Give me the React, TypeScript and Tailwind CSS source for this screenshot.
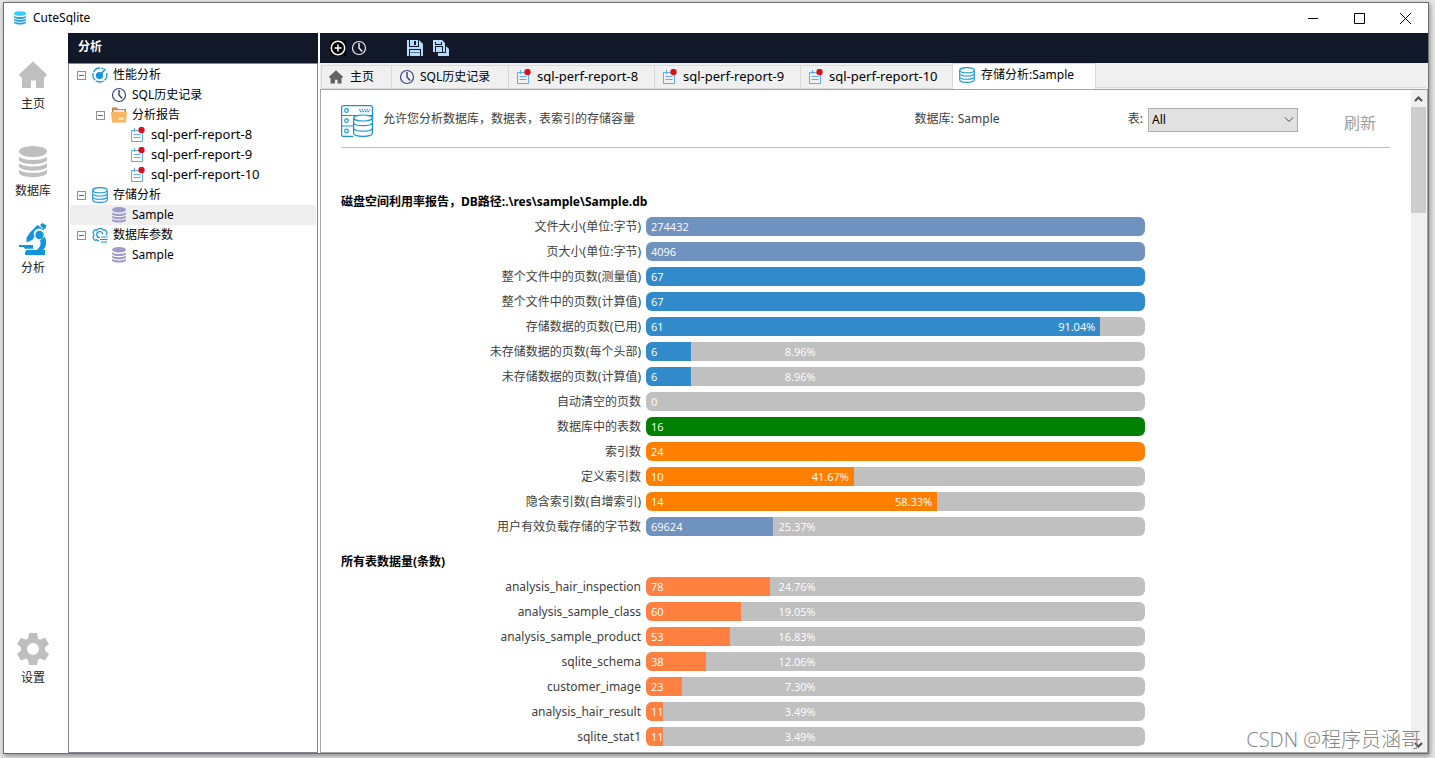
import React from 'react';

const FONT = "font-['Noto_Sans','Noto_Sans_CJK_SC',sans-serif]";

function ClockIcon({ className }: { className: string }) {
  return (
    <svg viewBox="0 0 16 16" className={className} fill="none" stroke="currentColor">
      <circle cx="8" cy="8" r="6.5" strokeWidth="1.2" />
      <path d="M8 3v5l3.2 3.6" strokeWidth="1.5" />
    </svg>
  );
}

function HomeIcon({ className }: { className: string }) {
  return (
    <svg viewBox="0 0 28 28" className={className} fill="currentColor">
      <path d="M14 .5 28 13.5 26.5 16H25v11h-8v-7.5h-5V27H3V16H1.5L0 13.5Z" />
    </svg>
  );
}

function StackIcon({ className, top = 'currentColor' }: { className: string; top?: string }) {
  return (
    <svg viewBox="0 0 28 32" className={className} fill="currentColor">
      <ellipse cx="14" cy="5.5" rx="14" ry="5.5" fill={top} />
      <path d="M0 10.5c3 4.500 25 4.500 28 0v3.500c-2 5.500-26 5.500-28 0Z" />
      <path d="M0 17c3 4.500 25 4.500 28 0v3.500c-2 5.500-26 5.500-28 0Z" />
      <path d="M0 23.500c3 4.500 25 4.500 28 0V27c-2 5.500-26 5.500-28 0Z" />
    </svg>
  );
}

function MicroscopeIcon({ className }: { className: string }) {
  return (
    <svg viewBox="0 0 28 32" className={className} fill="currentColor">
      <path d="M21 2 23.500 0l4 2.500-1 3-2 .5Z" />
      <path d="M18.500 2 25 6.500 24.500 7.500a5.500 5.500 0 0 0-9 6.200l-2 3L11 18l-3.500 1.500V15l3-5Z" />
      <circle cx="20.500" cy="12" r="4.200" />
      <path d="M25.500 13.500c3 5.500 1.500 10.500-1.500 13.500h2v5H6v-2.500L7.500 27h10c3.500-2 5-6 3.500-9.500Z" />
      <path d="M0 22h14v3.800H6L4.500 24H0Z" />
    </svg>
  );
}

function GearIcon({ className }: { className: string }) {
  return (
    <svg viewBox="0 0 32 32" className={className}>
      <path
        fill="currentColor"
        fillRule="evenodd"
        d="M12 0h8l1 5.500 2 1.200 5-2L32 11l-4 3.500v3L32 21l-4 6.500-5-2-2 1.200L20 32h-8l-1-5.300-2-1.200-5 2L0 21l4-3.500v-3L0 11l4-6.300 5 2 2-1.200ZM16 10a6 6 0 1 0 0 12 6 6 0 0 0 0-12Z"
      />
    </svg>
  );
}

function CylinderIcon({ className }: { className: string }) {
  return (
    <svg viewBox="0 0 16 16" className={className} fill="none" stroke="currentColor" strokeWidth="1.1">
      <ellipse cx="8" cy="3.2" rx="7.3" ry="2.6" />
      <path d="M.7 3.2v9.5c0 3.600 14.600 3.600 14.600 0V3.200M.7 6.500c0 3.400 14.600 3.400 14.600 0M.7 9.700c0 3.400 14.600 3.400 14.600 0" />
    </svg>
  );
}

function ReportIcon({ className }: { className: string }) {
  return (
    <svg viewBox="0 0 16 16" className={className} fill="none">
      <path d="M1.500 3.500h11v11h-11ZM3.500 7.500h7M3.500 10.500h7M4.500 1v4" stroke="#5badf5" />
      <circle cx="11.500" cy="3" r="3.200" fill="#dc1219" />
    </svg>
  );
}

function GaugeIcon({ className }: { className: string }) {
  return (
    <svg viewBox="0 0 16 16" className={className} fill="none" stroke="#1296db">
      <path d="M14.600 6A7 7 0 0 1 8 15 7 7 0 1 1 11.500 2" strokeWidth="1.300" strokeDasharray="8 1" />
      <circle cx="7.500" cy="8.500" r="3.600" fill="#1296db" stroke="none" />
      <path d="m7.500 8.500 6-6.500" strokeWidth="1.500" />
    </svg>
  );
}

function FolderIcon({ className }: { className: string }) {
  return (
    <svg viewBox="0 0 16 16" className={className}>
      <path d="M1 .5h5l1 1.500h8v4H1Z" fill="#c08a56" />
      <path d="M2.500 3h11v3h-11Z" fill="#eee6da" />
      <path d="M0 5h16l-1 10.500H1Z" fill="#f9b562" />
      <path d="M7.500 10h5v3h-5Z" fill="#fde0b2" />
    </svg>
  );
}

function ParamsIcon({ className }: { className: string }) {
  return (
    <svg viewBox="0 0 16 16" className={className} fill="none" stroke="#1296db" strokeWidth="1.200">
      <path d="M7 14.200 5 12.800l-2.500.2-1.500-2.500L2 8 1 5.500 2.500 3 5 3.200 7 1.500h2.500l2 1.700 2-.2L15 5.500 14 8" />
      <path d="M8 10.500A3 3 0 1 1 10.700 7M9 10h6.500M8 12.500h7.500M9 15h6" />
    </svg>
  );
}

function Sidebar() {
  return (
    <nav className="flex w-16 shrink-0 flex-col text-xs leading-4 text-[#222]">
      <a href="#home" className="mt-7 flex flex-col items-center gap-[7px] pr-1.5">
        <HomeIcon className="h-7 w-7 text-[#bfbfbf]" />主页
      </a>
      <a href="#database" className="mt-[34px] flex flex-col items-center gap-[5px] pr-1.5">
        <StackIcon className="h-8 w-7 text-[#bfbfbf]" />数据库
      </a>
      <a href="#analysis" className="mt-6 flex flex-col items-center gap-[5px] pr-1.5">
        <MicroscopeIcon className="h-8 w-7 text-[#1296db]" />分析
      </a>
      <a href="#settings" className="mt-auto mb-[67px] flex flex-col items-center gap-[5px] pr-1.5">
        <GearIcon className="h-8 w-8 text-[#bfbfbf]" />设置
      </a>
    </nav>
  );
}

type Node = { label: string; icon: React.ReactNode; pad: string; branch?: boolean; active?: boolean };

const report = <ReportIcon className="h-4 w-4" />;
const sample = (
  <span className="flex w-4 justify-center text-[#9f9bc9]">
    <StackIcon className="h-4 w-3.5" />
  </span>
);

const tree: Node[] = [
  { label: '性能分析', pad: 'pl-[7px] text-xs', branch: true, icon: <GaugeIcon className="h-4 w-4" /> },
  { label: 'SQL历史记录', pad: 'pl-[41px] text-xs', icon: <ClockIcon className="h-4 w-4 text-[#3d4380]" /> },
  { label: '分析报告', pad: 'pl-[26px] text-xs', branch: true, icon: <FolderIcon className="h-4 w-4" /> },
  { label: 'sql-perf-report-8', pad: 'pl-[60px] text-[13px]', icon: report },
  { label: 'sql-perf-report-9', pad: 'pl-[60px] text-[13px]', icon: report },
  { label: 'sql-perf-report-10', pad: 'pl-[60px] text-[13px]', icon: report },
  { label: '存储分析', pad: 'pl-[7px] text-xs', branch: true, icon: <CylinderIcon className="h-4 w-4 text-[#1296db]" /> },
  { label: 'Sample', pad: 'pl-[41px] text-xs', icon: sample, active: true },
  { label: '数据库参数', pad: 'pl-[7px] text-xs', branch: true, icon: <ParamsIcon className="h-4 w-4" /> },
  { label: 'Sample', pad: 'pl-[41px] text-xs', icon: sample },
];

function TreePanel() {
  return (
    <aside className="flex w-[250px] shrink-0 flex-col">
      <h2 className="h-[30px] bg-[#111827] px-2.5 text-xs leading-7 font-bold text-white">分析</h2>
      <ul className="flex-1 border border-[#828790] px-px py-px text-black">
        {tree.map((n, i) => (
          <li key={i} className={`flex h-5 items-center ${n.pad} ${n.active ? 'bg-[#efefef]' : ''}`}>
            {n.branch && (
              <button aria-label={`折叠 ${n.label}`} className="mr-1.5 flex h-[9px] w-[9px] items-center justify-center border border-[#919191] bg-white">
                <span className="h-px w-[5px] bg-[#4b63a7]" />
              </button>
            )}
            {n.icon}
            <span className="ml-[5px] whitespace-nowrap">{n.label}</span>
          </li>
        ))}
      </ul>
    </aside>
  );
}

function Toolbar() {
  return (
    <div className="flex h-[30px] shrink-0 items-center bg-[#111827] pl-2.5">
      <button aria-label="新建">
        <svg viewBox="0 0 16 16" className="h-4 w-4" fill="none" stroke="#fff" strokeWidth="1.500">
          <rect width="16" height="16" fill="#000" stroke="none" />
          <circle cx="8" cy="8" r="6.700" />
          <path d="M8 4.500v7M4.500 8h7" />
        </svg>
      </button>
      <button aria-label="历史" className="ml-[5px]"><ClockIcon className="h-4 w-4 text-[#f0eaf6]" /></button>
      <button aria-label="保存" className="ml-10">
        <svg viewBox="0 0 16 16" className="h-4 w-4">
          <path d="M0 0h12l4 4v12H0Z" fill="#b5dcfb" />
          <path d="M2 0h1v6h8V0h1v7H2ZM7 1h2v4H7ZM2 9h12v7h-1v-6H3v6H2Z" fill="#111827" />
          <path d="M3 12h10v1H3Z" fill="#5f7c94" />
        </svg>
      </button>
      <button aria-label="全部保存" className="ml-2.5">
        <svg viewBox="0 0 16 16" className="h-4 w-4">
          <path d="M0 0h9l3 3v9H0ZM13 6l3 3v7H5v-3h8Z" fill="#b5dcfb" />
          <path d="M2 2h1v2h5V2h1v3H2ZM2 6h8v6H9V7H3v5H2Z" fill="#111827" />
        </svg>
      </button>
    </div>
  );
}

const tabs = [
  { label: '主页', style: 'w-[70px] gap-[7px] text-xs', icon: <HomeIcon className="h-3.5 w-3.5 shrink-0 text-[#636363]" /> },
  { label: 'SQL历史记录', style: 'w-[117px] gap-[5px] text-xs', icon: <ClockIcon className="h-4 w-4 shrink-0 text-[#3d4380]" /> },
  { label: 'sql-perf-report-8', style: 'w-[146px] gap-[5px] text-[13px]', icon: <ReportIcon className="h-4 w-4 shrink-0" /> },
  { label: 'sql-perf-report-9', style: 'w-[146px] gap-[5px] text-[13px]', icon: <ReportIcon className="h-4 w-4 shrink-0" /> },
  { label: 'sql-perf-report-10', style: 'w-[152px] gap-[5px] text-[13px]', icon: <ReportIcon className="h-4 w-4 shrink-0" /> },
];

function TabStrip() {
  return (
    <div role="tablist" className="flex h-[26px] shrink-0 items-end bg-[#f0f0f0] pl-px text-black">
      {tabs.map((t) => (
        <button key={t.label} role="tab" aria-selected="false" className={`flex h-6 items-center border-y border-l border-[#d9d9d9] pl-[7px] whitespace-nowrap ${t.style}`}>
          {t.icon}
          {t.label}
        </button>
      ))}
      <button role="tab" aria-selected="true" className="flex h-[26px] w-36 items-center gap-1.5 border-x border-t border-[#d9d9d9] bg-white pb-1 pl-1.5 text-xs whitespace-nowrap">
        <CylinderIcon className="h-4 w-4 shrink-0 text-[#1296db]" />
        存储分析:Sample
      </button>
      <div className="mr-0.5 mb-px flex-1 border-b border-[#d9d9d9]" />
    </div>
  );
}

type Bar = { label: string; value: string; pct: number; color: string; showPct?: boolean };

const usage: Bar[] = [
  { label: '文件大小(单位:字节)', value: '274432', pct: 100, color: 'bg-[#7092be]' },
  { label: '页大小(单位:字节)', value: '4096', pct: 100, color: 'bg-[#7092be]' },
  { label: '整个文件中的页数(测量值)', value: '67', pct: 100, color: 'bg-[#318bcb]' },
  { label: '整个文件中的页数(计算值)', value: '67', pct: 100, color: 'bg-[#318bcb]' },
  { label: '存储数据的页数(已用)', value: '61', pct: 91.04, color: 'bg-[#318bcb]', showPct: true },
  { label: '未存储数据的页数(每个头部)', value: '6', pct: 8.96, color: 'bg-[#318bcb]', showPct: true },
  { label: '未存储数据的页数(计算值)', value: '6', pct: 8.96, color: 'bg-[#318bcb]', showPct: true },
  { label: '自动清空的页数', value: '0', pct: 0, color: 'bg-[#318bcb]' },
  { label: '数据库中的表数', value: '16', pct: 100, color: 'bg-[#008000]' },
  { label: '索引数', value: '24', pct: 100, color: 'bg-[#ff8000]' },
  { label: '定义索引数', value: '10', pct: 41.67, color: 'bg-[#ff8000]', showPct: true },
  { label: '隐含索引数(自增索引)', value: '14', pct: 58.33, color: 'bg-[#ff8000]', showPct: true },
  { label: '用户有效负载存储的字节数', value: '69624', pct: 25.37, color: 'bg-[#7092be]', showPct: true },
];

const rows: Bar[] = [
  { label: 'analysis_hair_inspection', value: '78', pct: 24.76, color: 'bg-[#ff8040]', showPct: true },
  { label: 'analysis_sample_class', value: '60', pct: 19.05, color: 'bg-[#ff8040]', showPct: true },
  { label: 'analysis_sample_product', value: '53', pct: 16.83, color: 'bg-[#ff8040]', showPct: true },
  { label: 'sqlite_schema', value: '38', pct: 12.06, color: 'bg-[#ff8040]', showPct: true },
  { label: 'customer_image', value: '23', pct: 7.3, color: 'bg-[#ff8040]', showPct: true },
  { label: 'analysis_hair_result', value: '11', pct: 3.49, color: 'bg-[#ff8040]', showPct: true },
  { label: 'sqlite_stat1', value: '11', pct: 3.49, color: 'bg-[#ff8040]', showPct: true },
];

function BarSection({ title, bars }: { title: string; bars: Bar[] }) {
  return (
    <section>
      <h3 className="text-xs leading-5 font-bold text-black">{title}</h3>
      <dl className="mt-[5px] flex flex-col gap-1.5">
        {bars.map((b) => (
          <div key={b.label} className="flex h-[19px] items-center gap-[5px]">
            <dt className="w-[300px] shrink-0 text-right text-xs whitespace-nowrap text-[#404040]">{b.label}</dt>
            <dd className="relative h-full w-full max-w-[499px] overflow-hidden rounded-md bg-[#c0c0c0] font-['Open_Sans',sans-serif] text-[11px] leading-[19px] text-white">
              <div className={`h-full ${b.color}`} style={{ width: `${b.pct}%` }} />
              <span className="absolute top-0 left-[5px]">{b.value}</span>
              {b.showPct && (
                <span className="absolute top-0 left-0 pr-[5px] text-right" style={{ width: `${Math.max(b.pct, 35)}%` }}>
                  {b.pct.toFixed(2)}%
                </span>
              )}
            </dd>
          </div>
        ))}
      </dl>
    </section>
  );
}

function ServerIcon() {
  return (
    <svg viewBox="0 0 32 32" className="mt-1 h-8 w-8 shrink-0" fill="none" stroke="#1296db" strokeWidth="1.200">
      <path d="M12 31.400H2.500Q.6 31.400.6 29.500V2.500Q.6.6 2.500.6h27q1.900 0 1.900 1.900V12M.6 10.500h30.800M.6 21H12.500" />
      <circle cx="5.500" cy="5.500" r="1.800" />
      <circle cx="5.500" cy="15.700" r="1.800" />
      <circle cx="5.500" cy="26" r="1.800" />
      <path d="M18 4.800h11M19 6.600h9" strokeDasharray="1.500 1" />
      <ellipse cx="22" cy="13" rx="9.400" ry="3" fill="#fff" />
      <path d="M12.600 13v15c0 4.500 18.800 4.500 18.800 0V13M12.600 17.500c0 4.200 18.800 4.200 18.800 0M12.600 23c0 4.200 18.800 4.200 18.800 0" />
    </svg>
  );
}

function ReportView() {
  return (
    <main className="flex min-h-0 flex-1 border border-[#a5a5a5] bg-white">
      <div className="min-w-0 flex-1 overflow-hidden pr-[21px] pl-5">
        <header className="flex h-[58px] items-center border-b border-[#7fd9ee] text-xs text-[#404040]">
          <ServerIcon />
          <p className="ml-2.5 whitespace-nowrap">允许您分析数据库，数据表，表索引的存储容量</p>
          <div className="ml-auto flex items-center">
            <span>数据库:</span>
            <span className="ml-1 w-[170px]">Sample</span>
            <label htmlFor="table">表:</label>
            <div className="relative mt-0.5 ml-[5px]">
              <select id="table" className="block h-6 w-[150px] appearance-none border border-[#adadad] bg-[#e1e1e1] pl-[3px] text-xs text-black">
                <option>All</option>
              </select>
              <svg viewBox="0 0 10 6" className="pointer-events-none absolute top-[9px] right-1 h-1.5 w-2.5" fill="none" stroke="#444">
                <path d="m1 .5 4 4 4-4" />
              </svg>
            </div>
            <button className="mt-2 mr-3.5 ml-[46px] text-base text-[#a0a0a0]">刷新</button>
          </div>
        </header>
        <div className="flex flex-col gap-4 pt-11">
          <BarSection title="磁盘空间利用率报告，DB路径:.\res\sample\Sample.db" bars={usage} />
          <BarSection title="所有表数据量(条数)" bars={rows} />
        </div>
      </div>
      <div className="flex w-4 shrink-0 flex-col items-center bg-[#f0f0f0] pr-px">
        <svg viewBox="0 0 9 6" className="mt-1.5 mb-[5px] h-1.5 w-[9px]" fill="none" stroke="#505050" strokeWidth="2">
          <path d="m1 5 3.500-3.500L8 5" />
        </svg>
        <div className="h-[106px] w-[15px] bg-[#cdcdcd]" />
        <svg viewBox="0 0 9 6" className="mt-auto mb-1 h-1.5 w-[9px]" fill="none" stroke="#505050" strokeWidth="2">
          <path d="m1 1 3.500 3.500L8 1" />
        </svg>
      </div>
    </main>
  );
}

export default function App() {
  return (
    <div className={`relative h-screen bg-[#e6e6e6] pt-0.5 pr-1.5 pb-1 pl-[3px] ${FONT}`}>
      <div className="flex h-full flex-col border border-[#6e6e6e] bg-white shadow-[1px_2px_5px_#0006]">
        <header className="flex h-[30px] shrink-0 items-center pl-2.5 text-xs text-black">
          <StackIcon className="h-3.5 w-3 text-[#2a9fdc]" top="#33ccff" />
          <h1 className="ml-[7px]">CuteSqlite</h1>
          <div className="ml-auto flex">
            {['M0 5.500h10', 'M.5.5h10v10H.5Z', 'm0 0 11 11M11 0 0 11'].map((d, i) => (
              <button key={d} aria-label={['最小化', '最大化', '关闭'][i]} className="flex h-[30px] w-[46px] items-center justify-center">
                <svg viewBox="0 0 11 11" className="h-[11px] w-[11px]" fill="none" stroke="#000"><path d={d} /></svg>
              </button>
            ))}
          </div>
        </header>
        <div className="flex min-h-0 flex-1">
          <Sidebar />
          <TreePanel />
          <div className="ml-0.5 flex min-w-0 flex-1 flex-col">
            <Toolbar />
            <TabStrip />
            <ReportView />
          </div>
        </div>
      </div>
      <div className="pointer-events-none absolute right-3.5 bottom-1 font-['Open_Sans','Noto_Sans_CJK_SC',sans-serif] text-xl leading-7 font-light whitespace-nowrap text-[#858585]">CSDN @程序员涵哥</div>
    </div>
  );
}
